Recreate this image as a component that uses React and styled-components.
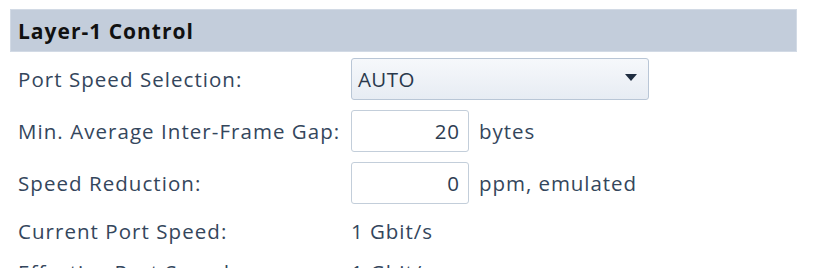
import React from "react";
import styled, { createGlobalStyle } from "styled-components";

const Global = createGlobalStyle`
  html, body { margin: 0; padding: 0; background: #ffffff; }
  body { font-family: "Open Sans", "Noto Sans", sans-serif; }
`;

const Panel = styled.div`
  padding: 9px 33px 0 10px;
  width: 830px;
  height: 268px;
  box-sizing: border-box;
  overflow: hidden;
`;

const Header = styled.div`
  height: 43px;
  box-sizing: border-box;
  background: #c3cddb;
  border: 1px solid #d2dae5;
  display: flex;
  align-items: center;
  padding-left: 7px;
  font-size: 21px;
  font-weight: 700;
  color: #111111;
  letter-spacing: 1px;
`;

const Rows = styled.div`
  display: grid;
  grid-template-columns: 333px 1fr;
  padding-left: 8px;
  padding-top: 1px;
`;

const Label = styled.div`
  display: flex;
  align-items: center;
  padding: ${(p) => (p.$text ? "7px 0 3px" : "5px 0")};
  line-height: 31px;
  font-size: 20.5px;
  color: #34465c;
  letter-spacing: 1.05px;
  white-space: nowrap;
`;

const Cell = styled(Label)`
  gap: 10px;
  letter-spacing: 0.95px;
`;

const Select = styled.div`
  width: 298px;
  height: 42px;
  box-sizing: border-box;
  border: 1px solid #b9c6d6;
  border-radius: 3px;
  background: linear-gradient(#f6f8fb, #e7ecf3);
  display: flex;
  align-items: center;
  justify-content: space-between;
  padding: 0 11px 0 6px;
  color: #2a384c;
  letter-spacing: 0.4px;
`;

const Arrow = styled.span`
  width: 0;
  height: 0;
  border-left: 6px solid transparent;
  border-right: 6px solid transparent;
  border-top: 7px solid #1f2d40;
  margin-top: -4px;
`;

const NumBox = styled.div`
  width: 118px;
  height: 42px;
  box-sizing: border-box;
  border: 1px solid #c3ceda;
  border-radius: 3px;
  background: #ffffff;
  display: flex;
  align-items: center;
  justify-content: flex-end;
  padding-right: 8px;
  color: #2e3d52;
`;

const rows = [
  { label: "Port Speed Selection:", kind: "select", value: "AUTO" },
  { label: "Min. Average Inter-Frame Gap:", kind: "num", value: "20", unit: "bytes" },
  { label: "Speed Reduction:", kind: "num", value: "0", unit: "ppm, emulated" },
  { label: "Current Port Speed:", kind: "text", value: "1 Gbit/s" },
  { label: "Effective Port Speed:", kind: "text", value: "1 Gbit/s" },
];

export default function App() {
  return (
    <>
      <Global />
      <Panel>
        <Header>Layer-1 Control</Header>
        <Rows>
          {rows.map((r) => {
            const isText = r.kind === "text";
            return (
              <React.Fragment key={r.label}>
                <Label $text={isText}>{r.label}</Label>
                <Cell $text={isText}>
                  {r.kind === "select" && (
                    <Select>
                      <span>{r.value}</span>
                      <Arrow />
                    </Select>
                  )}
                  {r.kind === "num" && (
                    <>
                      <NumBox>{r.value}</NumBox>
                      <span>{r.unit}</span>
                    </>
                  )}
                  {isText && <span>{r.value}</span>}
                </Cell>
              </React.Fragment>
            );
          })}
        </Rows>
      </Panel>
    </>
  );
}
